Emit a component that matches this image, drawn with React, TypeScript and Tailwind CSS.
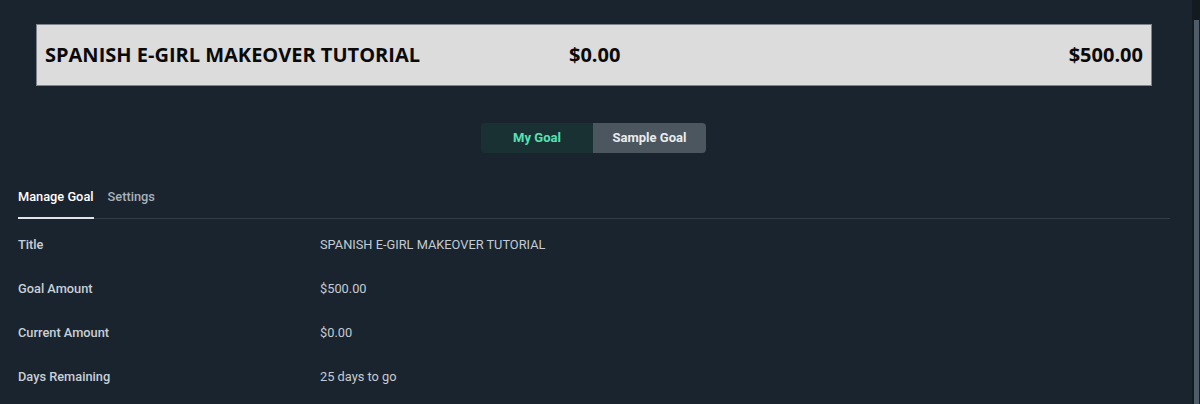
import { FC, useState } from "react";

const rows = [
    { label: "Title", value: "SPANISH E-GIRL MAKEOVER TUTORIAL" },
    { label: "Goal Amount", value: "$500.00" },
    { label: "Current Amount", value: "$0.00" },
    { label: "Days Remaining", value: "25 days to go" },
];

const App: FC = () => {
    const [goal, setGoal] = useState<"mine" | "sample">("sample");
    const [tab, setTab] = useState<"manage" | "settings">("manage");

    return (
        <div className="flex h-[404px] overflow-hidden bg-[#1a242e] font-['Roboto',sans-serif]">
            <div className="flex min-w-0 flex-1 flex-col">
                <div className="ml-9 mr-10 mt-6 flex h-[62px] items-center border border-[#7d848c] bg-[#dcdcdc] px-2 font-['Open_Sans',sans-serif] text-[20px] font-bold text-[#0a0a0a]">
                    <span className="w-[524px]">SPANISH E-GIRL MAKEOVER TUTORIAL</span>
                    <span>$0.00</span>
                    <span className="ml-auto">$500.00</span>
                </div>

                <div className="mt-[37px] flex justify-center pr-[5px]">
                    <div className="flex h-[30px] overflow-hidden rounded-[4px] text-[13px] font-bold">
                        <button
                            className={`w-[112px] ${goal === "mine" ? "bg-[#4b565e] text-[#e9ecef]" : "bg-[#1a3134] text-[#55e2b3]"}`}
                            onClick={() => setGoal("mine")}
                        >
                            My Goal
                        </button>
                        <button
                            className={`w-[113px] ${goal === "sample" ? "bg-[#4b565e] text-[#e9ecef]" : "bg-[#1a3134] text-[#55e2b3]"}`}
                            onClick={() => setGoal("sample")}
                        >
                            Sample Goal
                        </button>
                    </div>
                </div>

                <div className="ml-[18px] mr-[22px] mt-[34px] flex gap-[14px] border-b border-[#303c47] text-[12.8px] font-medium">
                    <button
                        className={`-mb-px border-b-2 pb-[10px] leading-5 ${tab === "manage" ? "border-[#dfe4e8] text-white" : "border-transparent text-[#a9b2ba]"}`}
                        onClick={() => setTab("manage")}
                    >
                        Manage Goal
                    </button>
                    <button
                        className={`-mb-px border-b-2 pb-[10px] leading-5 ${tab === "settings" ? "border-[#dfe4e8] text-white" : "border-transparent text-[#a9b2ba]"}`}
                        onClick={() => setTab("settings")}
                    >
                        Settings
                    </button>
                </div>

                <div className="mx-[18px] pt-1 text-[12.8px]">
                    {rows.map((row) => (
                        <div key={row.label} className="flex h-11 items-center">
                            <span className="w-[302px] font-medium text-[#c8d0d7]">{row.label}</span>
                            <span className="text-[#c4cbd2]">{row.value}</span>
                        </div>
                    ))}
                </div>
            </div>

            <div className="flex w-2 flex-col bg-[#131b21]">
                <div className="h-5"></div>
                <div className="ml-[2px] w-[5px] flex-1 bg-[#4f5b66]"></div>
            </div>
        </div>
    );
};

export default App;
